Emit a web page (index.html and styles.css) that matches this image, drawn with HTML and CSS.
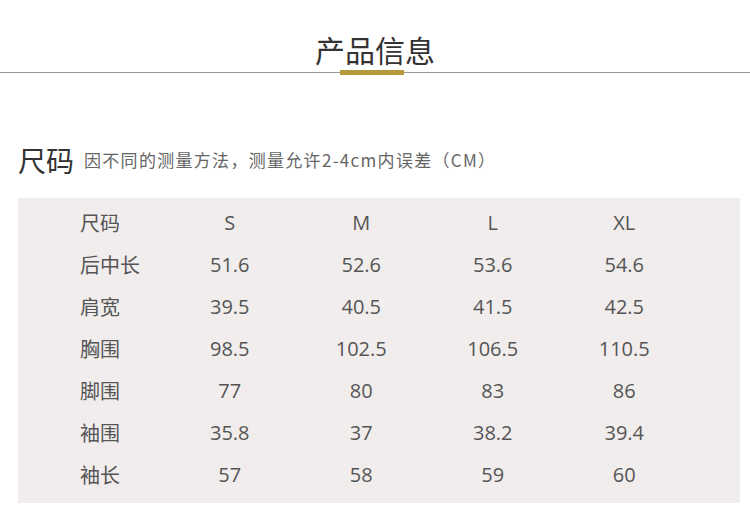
FILE: index.html
```html
<!DOCTYPE html>
<html lang="zh">
<head>
<meta charset="utf-8">
<link rel="stylesheet" href="styles.css">
</head>
<body>
<header class="head">
  <h1 class="title">产品信息</h1>
  <div class="rule"><span class="accent"></span></div>
</header>
<section class="size">
  <div class="size-head">
    <h2 class="size-title">尺码</h2>
    <span class="size-note">因不同的测量方法，测量允许2-4cm内误差（CM）</span>
  </div>
  <div class="table">
    <div class="row"><span class="lab">尺码</span><span>S</span><span>M</span><span>L</span><span>XL</span></div>
    <div class="row"><span class="lab">后中长</span><span>51.6</span><span>52.6</span><span>53.6</span><span>54.6</span></div>
    <div class="row"><span class="lab">肩宽</span><span>39.5</span><span>40.5</span><span>41.5</span><span>42.5</span></div>
    <div class="row"><span class="lab">胸围</span><span>98.5</span><span>102.5</span><span>106.5</span><span>110.5</span></div>
    <div class="row"><span class="lab">脚围</span><span>77</span><span>80</span><span>83</span><span>86</span></div>
    <div class="row"><span class="lab">袖围</span><span>35.8</span><span>37</span><span>38.2</span><span>39.4</span></div>
    <div class="row"><span class="lab">袖长</span><span>57</span><span>58</span><span>59</span><span>60</span></div>
  </div>
</section>
</body>
</html>
```
FILE: styles.css
```css
* { box-sizing: border-box; margin: 0; padding: 0; }
body {
  width: 750px;
  height: 520px;
  background: #fff;
  font-family: "Open Sans", "Noto Sans CJK SC", sans-serif;
  color: #555;
  overflow: hidden;
}
.head { padding-top: 30px; }
.title {
  text-align: center;
  font-weight: 400;
  font-size: 30px;
  line-height: 38px;
  color: #333;
  font-family: "Noto Sans CJK SC", sans-serif;
}
.rule {
  margin-top: 4px;
  height: 1px;
  background: #999;
  position: relative;
}
.accent {
  position: absolute;
  left: 340px;
  top: -2px;
  width: 64px;
  height: 5px;
  background: #b59a3c;
}
.size { padding: 67px 10px 0 18px; }
.size-head {
  display: flex;
  align-items: center;
  gap: 10px;
  height: 40px;
}
.size-title {
  font-weight: 400;
  font-size: 28px;
  line-height: 40px;
  color: #333;
  font-family: "Noto Sans CJK SC", sans-serif;
}
.size-note {
  font-size: 17px;
  line-height: 24px;
  margin-top: -1px;
  color: #666;
  font-family: "Noto Sans CJK SC", sans-serif;
  letter-spacing: 1.3px;
}
.table {
  margin-top: 18px;
  background: #f1eded;
  padding: 3px 0 8px 62px;
}
.row {
  display: grid;
  grid-template-columns: 84px 131.5px 131.5px 131.5px 131.5px;
  height: 42px;
  align-items: center;
  font-size: 20px;
}
.row span { text-align: center; }
.row .lab { text-align: left; font-family: "Noto Sans CJK SC", sans-serif; }
```
